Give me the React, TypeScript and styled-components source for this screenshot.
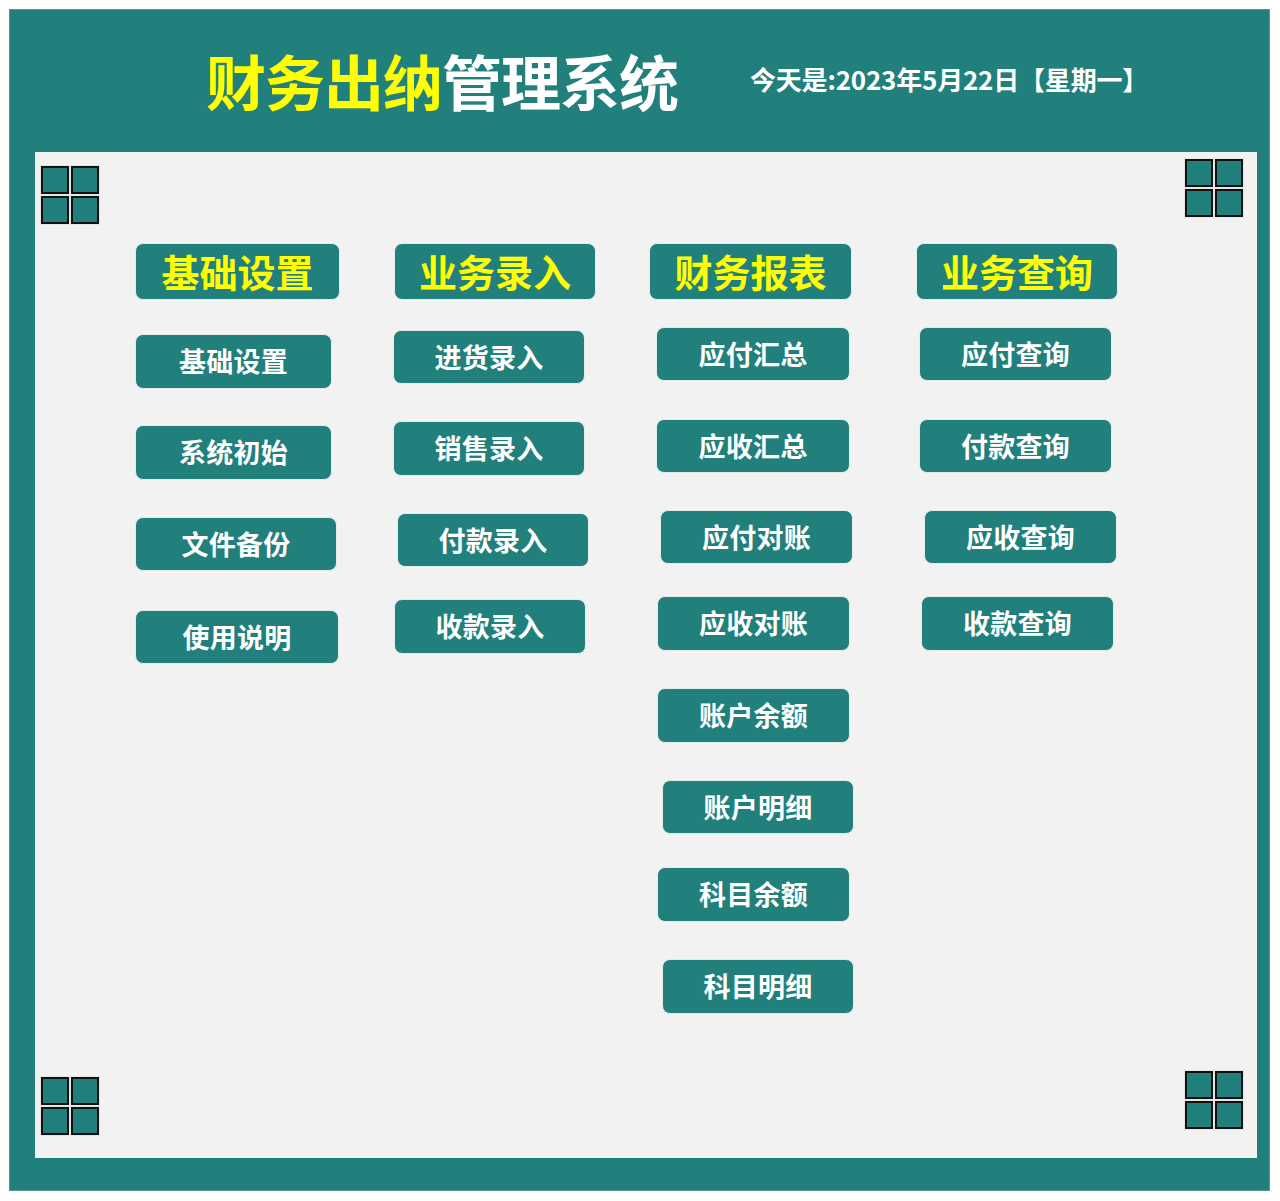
import React from 'react';
import styled, { createGlobalStyle } from 'styled-components';

const teal = '#21807c';

const GlobalStyle = createGlobalStyle`
  html, body {
    margin: 0;
    padding: 0;
    background: #ffffff;
  }
  body {
    font-family: "Noto Sans CJK SC", "Noto Sans", sans-serif;
  }
`;

const Frame = styled.div`
  margin: 9px 0 0 9px;
  width: 1261px;
  height: 1182px;
  box-sizing: border-box;
  background: ${teal};
  border: 1px solid #4f9a96;
  padding: 0 12px 32px 25px;
  display: flex;
  flex-direction: column;
`;

const Header = styled.header`
  height: 142px;
  display: flex;
  align-items: center;
  padding-left: 171px;
  padding-bottom: 2px;
  box-sizing: border-box;
`;

const Title = styled.h1`
  margin: 0;
  font-size: 60px;
  font-weight: 700;
  letter-spacing: -1px;
  color: #ffffff;
  line-height: 1;
`;

const Yellow = styled.span`
  color: #ffff00;
`;

const Today = styled.div`
  margin-left: 72px;
  margin-bottom: 4px;
  font-size: 26px;
  font-weight: 700;
  color: #ffffff;
  letter-spacing: -0.2px;
`;

const Panel = styled.main`
  position: relative;
  flex: 1;
  background: #f2f2f2;
  display: flex;
  padding: 91px 0 0 100px;
`;

const Column = styled.section<{ $width: number }>`
  width: ${({ $width }) => $width}px;
  display: flex;
  flex-direction: column;
  align-items: flex-start;
`;

const Tile = styled.button<{ $dx: number; $mt: number; $w: number; $h: number; $head?: boolean }>`
  box-sizing: border-box;
  margin: ${({ $mt }) => $mt}px 0 0 ${({ $dx }) => $dx}px;
  width: ${({ $w }) => $w}px;
  height: ${({ $h }) => $h}px;
  border-radius: 8px;
  border: 1px solid #e2ecea;
  background: ${teal};
  color: ${({ $head }) => ($head ? '#ffff00' : '#ffffff')};
  font-family: "Noto Sans CJK SC", sans-serif;
  font-weight: 700;
  font-size: ${({ $head }) => ($head ? '38px' : '27px')};
  letter-spacing: ${({ $head }) => ($head ? '0px' : '0.3px')};
  line-height: 1;
  padding: 0 0 2px;
  display: flex;
  align-items: center;
  justify-content: center;
  cursor: pointer;
`;

const Corner = styled.div<{ $top?: number; $bottom?: number; $left?: number; $right?: number }>`
  position: absolute;
  ${({ $top }) => $top !== undefined && `top: ${$top}px;`}
  ${({ $bottom }) => $bottom !== undefined && `bottom: ${$bottom}px;`}
  ${({ $left }) => $left !== undefined && `left: ${$left}px;`}
  ${({ $right }) => $right !== undefined && `right: ${$right}px;`}
  display: grid;
  grid-template-columns: 28px 28px;
  grid-template-rows: 28px 28px;
  gap: 2px;
  padding: 1px;
  background: #e6e6e6;
`;

const Cell = styled.div`
  background: ${teal};
  border: 2px solid #111111;
`;

type Item = { label: string; dx: number; mt: number; w: number; h: number };
type Group = { width: number; head: Item; items: Item[] };

const groups: Group[] = [
  {
    width: 258,
    head: { label: '基础设置', dx: 0, mt: 0, w: 205, h: 57 },
    items: [
      { label: '基础设置', dx: 0, mt: 34, w: 197, h: 55 },
      { label: '系统初始', dx: 0, mt: 36, w: 197, h: 55 },
      { label: '文件备份', dx: 0, mt: 37, w: 202, h: 54 },
      { label: '使用说明', dx: 0, mt: 39, w: 204, h: 54 },
    ],
  },
  {
    width: 256,
    head: { label: '业务录入', dx: 1, mt: 0, w: 202, h: 57 },
    items: [
      { label: '进货录入', dx: 0, mt: 30, w: 192, h: 54 },
      { label: '销售录入', dx: 0, mt: 37, w: 192, h: 55 },
      { label: '付款录入', dx: 4, mt: 37, w: 192, h: 54 },
      { label: '收款录入', dx: 1, mt: 32, w: 192, h: 55 },
    ],
  },
  {
    width: 267,
    head: { label: '财务报表', dx: 0, mt: 0, w: 203, h: 57 },
    items: [
      { label: '应付汇总', dx: 7, mt: 27, w: 194, h: 54 },
      { label: '应收汇总', dx: 7, mt: 38, w: 194, h: 54 },
      { label: '应付对账', dx: 11, mt: 37, w: 193, h: 54 },
      { label: '应收对账', dx: 8, mt: 32, w: 193, h: 55 },
      { label: '账户余额', dx: 8, mt: 37, w: 193, h: 55 },
      { label: '账户明细', dx: 13, mt: 37, w: 192, h: 54 },
      { label: '科目余额', dx: 8, mt: 33, w: 193, h: 55 },
      { label: '科目明细', dx: 13, mt: 37, w: 192, h: 55 },
    ],
  },
  {
    width: 210,
    head: { label: '业务查询', dx: 0, mt: 0, w: 202, h: 57 },
    items: [
      { label: '应付查询', dx: 3, mt: 27, w: 193, h: 54 },
      { label: '付款查询', dx: 3, mt: 38, w: 193, h: 54 },
      { label: '应收查询', dx: 8, mt: 37, w: 193, h: 54 },
      { label: '收款查询', dx: 5, mt: 32, w: 193, h: 55 },
    ],
  },
];

const Squares = (props: { $top?: number; $bottom?: number; $left?: number; $right?: number }) => (
  <Corner {...props}>
    <Cell />
    <Cell />
    <Cell />
    <Cell />
  </Corner>
);

const App = () => {
  return (
    <>
      <GlobalStyle />
      <Frame>
        <Header>
          <Title>
            <Yellow>财务出纳</Yellow>管理系统
          </Title>
          <Today>今天是:2023年5月22日【星期一】</Today>
        </Header>
        <Panel>
          <Squares $top={13} $left={5} />
          <Squares $top={6} $right={13} />
          <Squares $bottom={22} $left={5} />
          <Squares $bottom={28} $right={13} />
          {groups.map((g) => (
            <Column key={g.head.label + g.width} $width={g.width}>
              <Tile $head $dx={g.head.dx} $mt={g.head.mt} $w={g.head.w} $h={g.head.h}>
                {g.head.label}
              </Tile>
              {g.items.map((it) => (
                <Tile key={it.label} $dx={it.dx} $mt={it.mt} $w={it.w} $h={it.h}>
                  {it.label}
                </Tile>
              ))}
            </Column>
          ))}
        </Panel>
      </Frame>
    </>
  );
};

export default App;
